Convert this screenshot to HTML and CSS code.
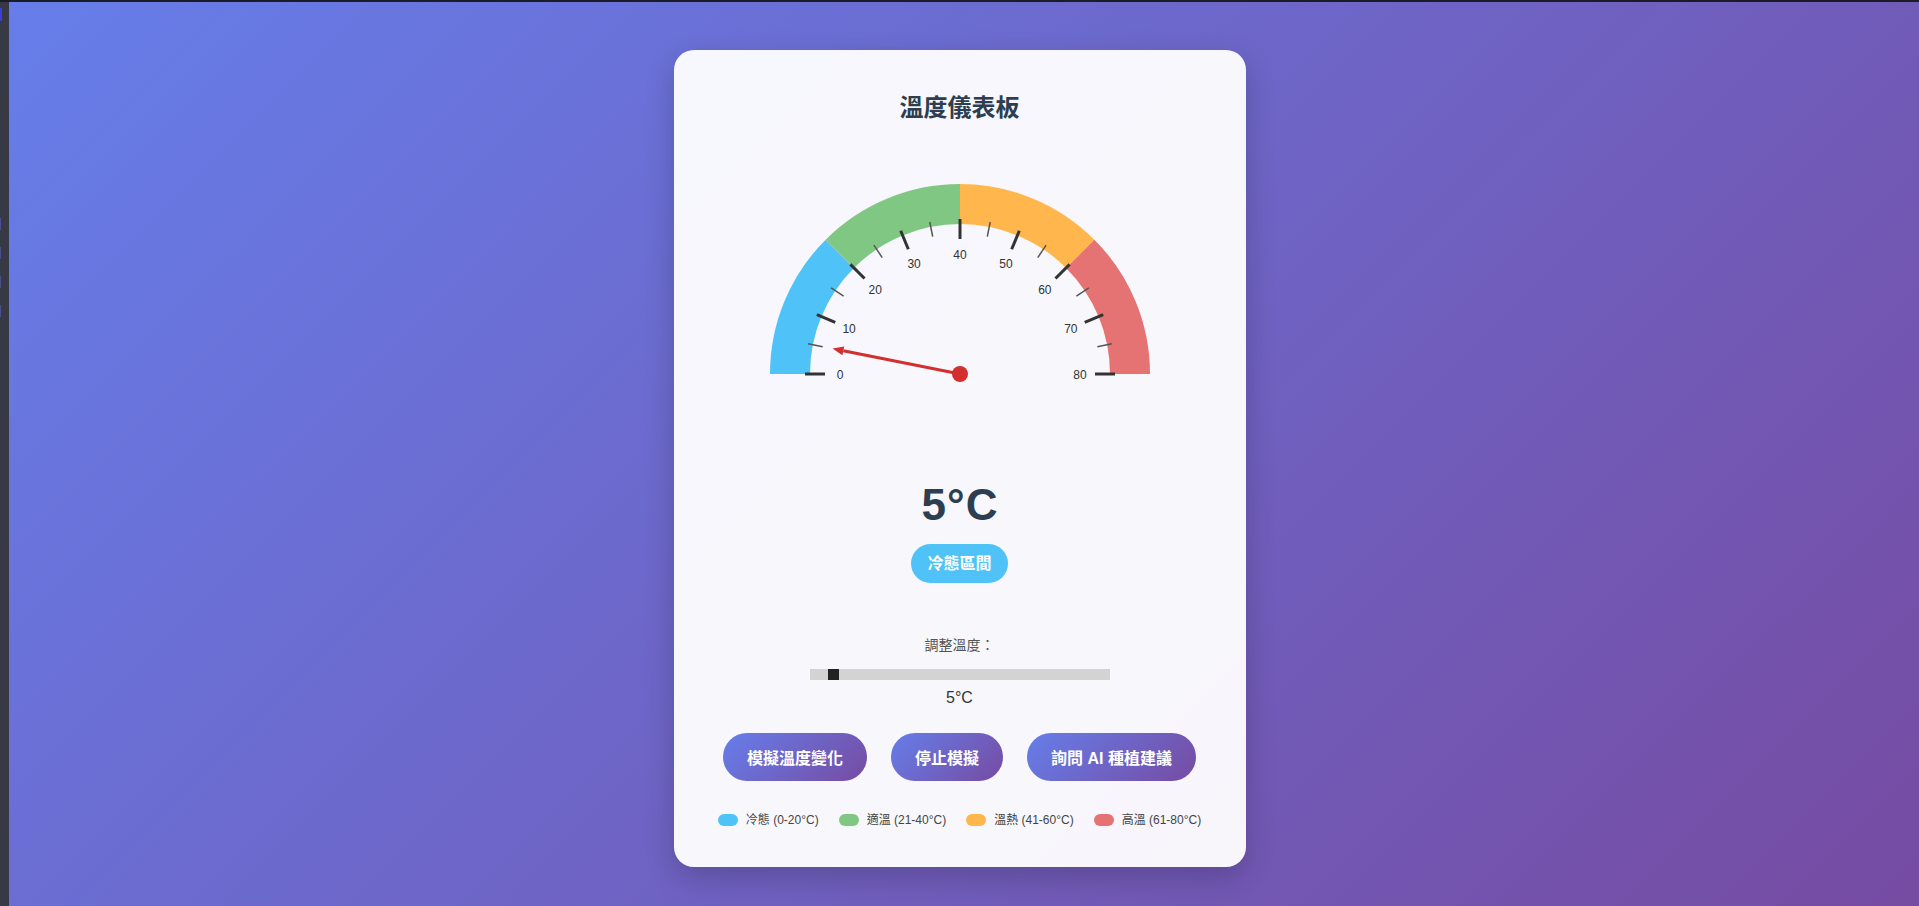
FILE: index.html
```html
<!DOCTYPE html>
<html lang="zh-Hant">
<head>
<meta charset="utf-8">
<title>溫度儀表板</title>
<link rel="stylesheet" href="styles.css">
</head>
<body>
<div class="edge-left"><span class="mark mark-top"></span><span class="mark"></span><span class="mark"></span><span class="mark"></span><span class="mark"></span></div>
<div class="edge-top"></div>
<main class="page">
  <section class="card">
    <h1 class="title">溫度儀表板</h1>
    <svg class="gauge" width="400" height="220" viewBox="0 0 400 220">
      <g fill="none" stroke-width="40">
        <path d="M30 200 A170 170 0 0 1 79.79 79.79" stroke="#4fc3f7"/>
        <path d="M79.79 79.79 A170 170 0 0 1 200 30" stroke="#81c784"/>
        <path d="M200 30 A170 170 0 0 1 320.21 79.79" stroke="#ffb74d"/>
        <path d="M320.21 79.79 A170 170 0 0 1 370 200" stroke="#e57373"/>
      </g>
      <g stroke="#333" stroke-width="3">
        <line x1="65" y1="200" x2="45" y2="200"/>
        <line x1="75.28" y1="148.34" x2="56.80" y2="140.68"/>
        <line x1="104.54" y1="104.54" x2="90.40" y2="90.40"/>
        <line x1="148.34" y1="75.28" x2="140.68" y2="56.80"/>
        <line x1="200" y1="65" x2="200" y2="45"/>
        <line x1="251.66" y1="75.28" x2="259.32" y2="56.80"/>
        <line x1="295.46" y1="104.54" x2="309.60" y2="90.40"/>
        <line x1="324.72" y1="148.34" x2="343.20" y2="140.68"/>
        <line x1="335" y1="200" x2="355" y2="200"/>
      </g>
      <g stroke="#555" stroke-width="1.5">
        <line x1="62.69" y1="172.69" x2="47.98" y2="169.76"/>
        <line x1="83.59" y1="122.22" x2="71.12" y2="113.89"/>
        <line x1="122.22" y1="83.59" x2="113.89" y2="71.12"/>
        <line x1="172.69" y1="62.69" x2="169.76" y2="47.98"/>
        <line x1="227.31" y1="62.69" x2="230.24" y2="47.98"/>
        <line x1="277.78" y1="83.59" x2="286.11" y2="71.12"/>
        <line x1="316.41" y1="122.22" x2="328.88" y2="113.89"/>
        <line x1="337.31" y1="172.69" x2="352.02" y2="169.76"/>
      </g>
      <g class="tick-label" text-anchor="middle" dominant-baseline="central">
        <text x="80" y="200.5">0</text>
        <text x="89.13" y="154.58">10</text>
        <text x="115.15" y="115.65">20</text>
        <text x="154.08" y="89.63">30</text>
        <text x="200" y="80.5">40</text>
        <text x="245.92" y="89.63">50</text>
        <text x="284.85" y="115.65">60</text>
        <text x="310.87" y="154.58">70</text>
        <text x="320" y="200.5">80</text>
      </g>
      <line x1="200" y1="200" x2="83.3" y2="176.8" stroke="#d32f2f" stroke-width="3"/>
      <polygon points="72.5,174.6 84.2,172.4 82.4,181.2" fill="#d32f2f"/>
      <circle cx="200" cy="200" r="8" fill="#d32f2f"/>
    </svg>
    <div class="temp-value">5°C</div>
    <div class="zone-badge">冷態區間</div>
    <label class="slider-label" for="temp">調整溫度：</label>
    <input class="slider" id="temp" type="range" min="0" max="80" value="5">
    <div class="slider-value">5°C</div>
    <div class="actions">
      <button class="btn">模擬溫度變化</button>
      <button class="btn">停止模擬</button>
      <button class="btn">詢問 AI 種植建議</button>
    </div>
    <ul class="legend">
      <li class="legend-item"><span class="swatch swatch-cold"></span>冷態 (0-20°C)</li>
      <li class="legend-item"><span class="swatch swatch-mild"></span>適溫 (21-40°C)</li>
      <li class="legend-item"><span class="swatch swatch-warm"></span>溫熱 (41-60°C)</li>
      <li class="legend-item"><span class="swatch swatch-hot"></span>高溫 (61-80°C)</li>
    </ul>
  </section>
</main>
</body>
</html>
```

FILE: styles.css
```css
* { box-sizing: border-box; }

html, body { height: 100%; }

body {
  margin: 0;
  font-family: "Liberation Sans", "Noto Sans CJK TC", Arial, sans-serif;
  background: linear-gradient(135deg, #667eea 0%, #764ba2 100%);
  overflow: hidden;
}

.edge-left {
  position: fixed;
  left: 0;
  top: 0;
  bottom: 0;
  width: 9px;
  background: #373945;
  display: flex;
  flex-direction: column;
  gap: 17px;
  padding-top: 218px;
}

.edge-left .mark {
  display: block;
  width: 1px;
  height: 12px;
  background: #4a4f8a;
}

.edge-left .mark-top {
  position: absolute;
  top: 8px;
  width: 2px;
  height: 13px;
  background: #3b3fd6;
}

.edge-top {
  position: fixed;
  left: 0;
  right: 0;
  top: 0;
  height: 2px;
  background: #1b1c28;
}

.page {
  display: flex;
  justify-content: center;
  padding-top: 50px;
}

.card {
  width: 572px;
  height: 817px;
  background: rgba(255, 255, 255, 0.95);
  border-radius: 20px;
  box-shadow: 0 10px 30px rgba(0, 0, 0, 0.2);
  display: flex;
  flex-direction: column;
  align-items: center;
  padding: 42px 20px 0;
}

.title {
  margin: 0;
  font-size: 24px;
  line-height: 32px;
  font-weight: 700;
  color: #2c3e50;
}

.gauge {
  display: block;
  margin-top: 50px;
}

.tick-label {
  font-family: "Liberation Sans", Arial, sans-serif;
  font-size: 12px;
  fill: #333;
}

.temp-value {
  margin-top: 88px;
  margin-left: 1px;
  font-size: 44px;
  line-height: 46px;
  letter-spacing: 1px;
  font-weight: 700;
  color: #2c3e50;
}

.zone-badge {
  margin-top: 16px;
  padding: 8px 16px;
  font-size: 16px;
  line-height: 23px;
  font-weight: 700;
  color: #fff;
  background: #4fc3f7;
  border-radius: 20px;
}

.slider-label {
  margin-top: 52px;
  font-size: 14px;
  line-height: 20px;
  color: #555;
}

.slider {
  -webkit-appearance: none;
  appearance: none;
  margin: 14px 0 0;
  width: 300px;
  height: 11px;
  background: #d3d3d3;
  outline: none;
}

.slider::-webkit-slider-thumb {
  -webkit-appearance: none;
  appearance: none;
  width: 11px;
  height: 11px;
  background: #222;
  border: none;
  cursor: pointer;
}

.slider-value {
  margin-top: 8px;
  font-size: 16px;
  line-height: 20px;
  color: #333;
}

.actions {
  margin-top: 25px;
  display: flex;
  gap: 24px;
}

.btn {
  height: 48px;
  padding: 0 24px;
  border: none;
  border-radius: 25px;
  font-family: inherit;
  font-size: 16px;
  font-weight: 700;
  color: #fff;
  background: linear-gradient(135deg, #667eea 0%, #764ba2 100%);
  cursor: pointer;
}

.legend {
  list-style: none;
  margin: 31px 0 0;
  padding: 0;
  display: flex;
  gap: 20px;
}

.legend-item {
  display: flex;
  align-items: center;
  font-size: 12px;
  line-height: 16px;
  color: #444;
}

.swatch {
  width: 20px;
  height: 12px;
  border-radius: 6px;
  margin-right: 8px;
}

.swatch-cold { background: #4fc3f7; }
.swatch-mild { background: #81c784; }
.swatch-warm { background: #ffb74d; }
.swatch-hot  { background: #e57373; }
```
